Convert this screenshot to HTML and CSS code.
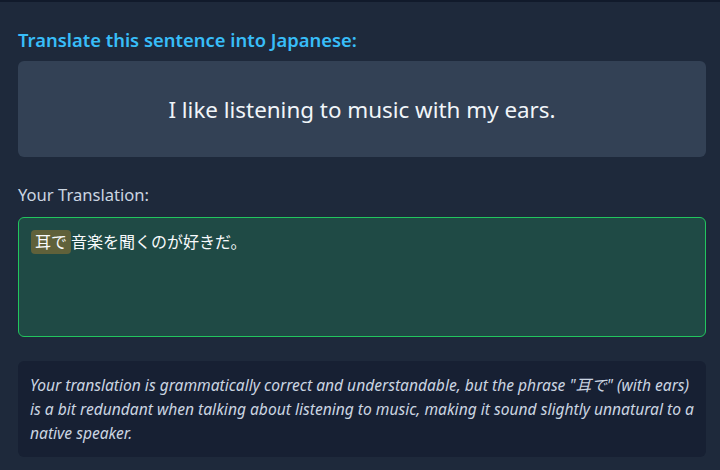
FILE: index.html
```html
<!DOCTYPE html>
<html lang="en">
<head>
<meta charset="utf-8">
<link rel="stylesheet" href="styles.css">
</head>
<body>
<div class="page">
  <h2 class="prompt">Translate this sentence into Japanese:</h2>
  <div class="source">I like listening to music with my ears.</div>
  <div class="label">Your Translation:</div>
  <div class="answer"><span class="hl">耳で</span>音楽を聞くのが好きだ。</div>
  <div class="feedback"><p class="feedback-text">Your translation is grammatically correct and understandable, but the phrase "耳で" (with ears) is a bit redundant when talking about listening to music, making it sound slightly unnatural to a native speaker.</p></div>
</div>
</body>
</html>
```
FILE: styles.css
```css
html, body {
  margin: 0;
  padding: 0;
  background: #1e293b;
}
body {
  border-top: 2px solid #111a2b;
  font-family: "Noto Sans", "Noto Sans CJK JP", sans-serif;
  color: #e2e8f0;
}
.page {
  padding: 26px 14px 0 18px;
  display: flex;
  flex-direction: column;
}
.prompt {
  margin: 0 0 9px 0;
  font-size: 18.4px;
  font-weight: 600;
  color: #38bdf8;
  line-height: 24px;
}
.source {
  background: #334155;
  border-radius: 6px;
  height: 96px;
  display: flex;
  align-items: center;
  justify-content: center;
  font-size: 22.4px;
  color: #f1f5f9;
}
.label {
  margin-top: 27px;
  font-size: 16.6px;
  color: #cbd5e1;
  line-height: 22px;
}
.answer {
  margin-top: 11px;
  height: 106px;
  border: 1px solid #22c55e;
  border-radius: 6px;
  background: #1f4a45;
  padding: 12px 12px 0 12px;
  font-size: 16px;
  line-height: 24px;
  color: #f8fafc;
}
.hl {
  background: #60613a;
  border-radius: 4px;
  padding: 1px 4px;
}
.feedback {
  margin-top: 24px;
  background: #172033;
  border-radius: 6px;
  padding: 12px;
}
.feedback-text {
  margin: 0;
  font-size: 15.6px;
  line-height: 24px;
  font-style: italic;
  color: #cbd5e1;
}
```
